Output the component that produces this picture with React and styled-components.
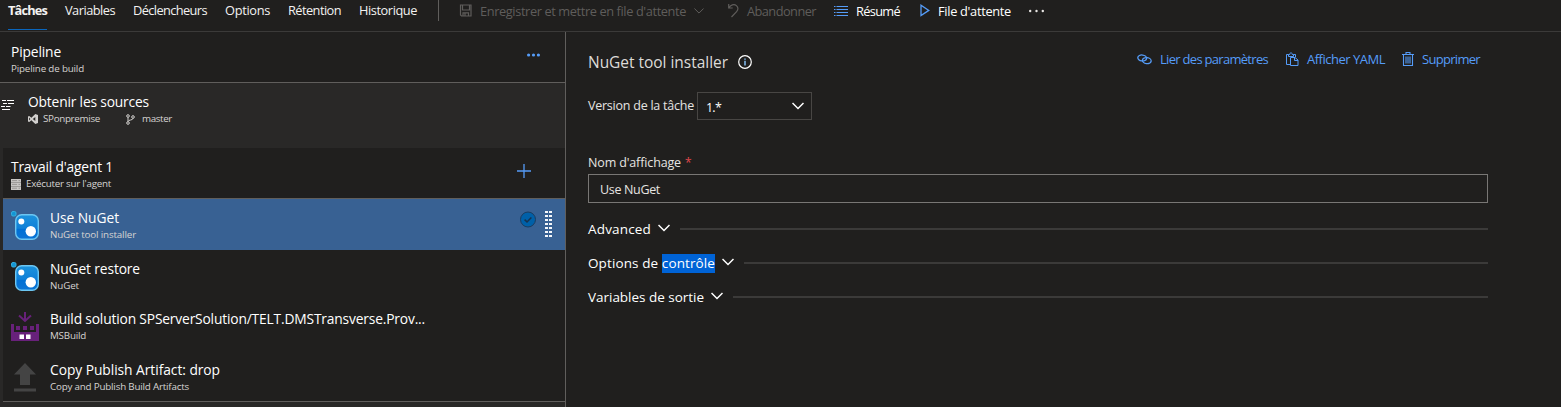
import React, { useLayoutEffect, useRef, useState } from "react";
import styled, { createGlobalStyle } from "styled-components";

const c = {
  bg: "#201f1e",
  panel: "#292827",
  line: "#3b3a39",
  edge: "#605e5c",
  blue: "#559cf8",
  disabled: "#5f5d5b",
};

const GlobalStyle = createGlobalStyle`
  * { box-sizing: border-box; }
  body {
    margin: 0;
    background: ${c.bg};
    color: #fff;
    font-family: "Open Sans", "Noto Sans", sans-serif;
    overflow: hidden;
  }
  svg { display: block; flex: none; }
`;

const TextBox = styled.span`
  display: block;
  flex: none;
  white-space: nowrap;
  width: ${(p) => p.$width}px;
  font-size: ${(p) => p.$size}px;
  line-height: ${(p) => p.$line || 20}px;
  font-weight: ${(p) => p.$weight || 400};
  color: ${(p) => p.$color || "inherit"};
`;

/* Tracks its letters so that the string fills the given width. */
function Text({ width, size = 13, line, weight, color, children }) {
  const ref = useRef(null);
  const [spacing, setSpacing] = useState(0);
  useLayoutEffect(() => {
    const natural = ref.current.getBoundingClientRect().width;
    const count = ref.current.textContent.length;
    setSpacing((width - natural) / count);
  }, [width]);
  return (
    <TextBox $width={width} $size={size} $line={line} $weight={weight} $color={color}>
      <span ref={ref} style={{ letterSpacing: spacing }}>{children}</span>
    </TextBox>
  );
}

const Page = styled.div`
  display: flex;
  flex-direction: column;
  height: 407px;
`;
const TopBar = styled.header`
  display: flex;
  height: 32px;
  border-bottom: 1px solid ${c.line};
`;
const Tabs = styled.nav`
  display: flex;
  gap: 18px;
  width: 438px;
  padding-left: 8px;
`;
const Tab = styled.div`
  height: 30px;
  border-bottom: 1px solid ${(p) => (p.$active ? "#0a66bd" : "transparent")};
`;
const Tools = styled.div`
  display: flex;
  height: 21px;
  align-items: center;
  padding-left: 20px;
  border-left: 1px solid ${c.edge};
`;
const Tool = styled.div`
  display: flex;
  align-items: center;
  height: 20px;
  gap: 8px;
  margin-right: ${(p) => p.$after}px;
  color: ${(p) => (p.$disabled ? c.disabled : "#fff")};
`;
const Body = styled.div`
  display: flex;
  flex: 1;
  min-height: 0;
`;
const Sidebar = styled.aside`
  display: flex;
  flex-direction: column;
  width: 566px;
  border-right: 1px solid ${c.edge};
  background: ${c.panel};
`;
const PipelineHead = styled.div`
  display: flex;
  justify-content: space-between;
  height: 51px;
  padding: 10px 25px 0 11px;
  background: ${c.bg};
  border-bottom: 1px solid ${c.edge};
`;
const MoreButton = styled.div`
  padding-top: 11px;
`;
const Sources = styled.div`
  display: flex;
  height: 65px;
  padding: 9px 0 0 0;
  gap: 14px;
`;
const SourceGlyph = styled.div`
  padding-top: 7px;
`;
const SubLine = styled.div`
  display: flex;
  align-items: center;
  gap: 5px;
  height: 14px;
`;
const Branch = styled.div`
  display: flex;
  align-items: center;
  gap: 7px;
  margin-left: 21px;
`;
const Job = styled.section`
  margin-left: 3px;
  height: 254px;
  background: ${c.bg};
  border-bottom: 1px solid ${c.edge};
`;
const JobHead = styled.div`
  display: flex;
  justify-content: space-between;
  height: 51px;
  padding: 9px 34px 0 8px;
  border-bottom: 1px solid ${c.edge};
`;
const AddButton = styled.div`
  padding-top: 7px;
`;
const Task = styled.div`
  display: flex;
  height: ${(p) => p.$height}px;
  padding: 9px 13px 0 8px;
  background: ${(p) => (p.$selected ? "#386193" : "transparent")};
`;
const TaskIcon = styled.div`
  width: 39px;
  padding-top: 3px;
`;
const TaskText = styled.div`
  flex: 1;
`;
const TaskState = styled.div`
  display: flex;
  gap: 9px;
  padding-top: 3px;
`;
const Grip = styled.div`
  display: grid;
  grid-template-columns: 3px 3px;
  grid-auto-rows: 2px;
  gap: 2px 1px;
  align-content: start;
  & > i { background: #f4f7fa; }
`;
const Detail = styled.main`
  flex: 1;
  padding: 17px 73px 0 22px;
`;
const DetailHead = styled.div`
  display: flex;
  justify-content: space-between;
  height: 43px;
  padding-right: 8px;
`;
const Heading = styled.div`
  display: flex;
  align-items: center;
  gap: 10px;
  height: 25px;
`;
const Actions = styled.div`
  display: flex;
  gap: 17px;
  height: 20px;
  color: ${c.blue};
`;
const Action = styled.div`
  display: flex;
  align-items: center;
  gap: 8px;
`;
const VersionRow = styled.div`
  display: flex;
  height: 28px;
  gap: 3px;
  margin-bottom: 33px;
`;
const VersionLabel = styled.div`
  padding-top: 4px;
`;
const Select = styled.div`
  display: flex;
  align-items: center;
  justify-content: space-between;
  width: 115px;
  padding: 0 7px 0 8px;
  border: 1px solid #484644;
`;
const SelectValue = styled.div`
  padding-top: 3px;
`;
const FieldLabel = styled.div`
  display: flex;
  gap: 4px;
  height: 21px;
`;
const Input = styled.div`
  height: 29px;
  padding: 5px 11px 0;
  border: 1px solid #797775;
  margin-bottom: 9px;
`;
const Group = styled.div`
  display: flex;
  align-items: center;
  height: 34px;
`;
const Rule = styled.div`
  flex: 1;
  height: 2px;
  margin-left: 10px;
  background: ${c.line};
`;
const GroupChevron = styled.div`
  margin-left: 7px;
  padding-bottom: 2px;
`;
const Selection = styled.mark`
  padding-bottom: 1px;
  background: #0063d6;
  color: #fff;
`;

const Chevron = ({ w = 12, color = "#fff", stroke = 1.5 }) => (
  <svg width={w} height="8" viewBox="0 0 12 8" fill="none" stroke={color} strokeWidth={stroke}>
    <path d="M.5 1 6 6.5 11.5 1" />
  </svg>
);
const SaveIcon = () => (
  <svg width="13" height="14" viewBox="0 0 13 14" fill="none" stroke={c.disabled} strokeWidth="1.2">
    <path d="M1.5 1h10.500v11H2.500l-1-1zM3.500 1v5h7v-5M4 12V8.800h5.500V12M6 9.500v2" />
  </svg>
);
const UndoIcon = () => (
  <svg width="11" height="15" viewBox="0 0 11 15" fill="none" stroke={c.disabled} strokeWidth="1.200">
    <path d="M.7 1v4h4M.9 4.800C2.500 2 6 .6 8.400 2.600c2 1.700 2 4.200.2 6L3.500 14" />
  </svg>
);
const ListIcon = () => (
  <svg width="14" height="12" viewBox="0 0 14 12" stroke={c.blue} strokeWidth="1.2">
    <path d="M0 1.500h1.500M2.500 1.500H14M0 4.500h1.500M2.500 4.500H14M0 7.500h1.500M2.500 7.500H14M0 10.500h1.500M2.500 10.500H14" />
  </svg>
);
const PlayIcon = () => (
  <svg width="10" height="13" viewBox="0 0 10 13" fill="none" stroke={c.blue} strokeWidth="1.300">
    <path d="M1 1.200v10.400L8.800 6.400z" />
  </svg>
);
const Dots = ({ color, w = 13, r = 1.600 }) => (
  <svg width={w} height="4" viewBox={`0 0 ${w} 4`} fill={color}>
    <circle cx={r} cy="2" r={r} />
    <circle cx={w / 2} cy="2" r={r} />
    <circle cx={w - r} cy="2" r={r} />
  </svg>
);
const StepsIcon = () => (
  <svg width="14" height="12" viewBox="0 0 14 12" stroke="#fff">
    <path d="M2 1.500h4M7 1.500h7M4 4.500h3M8 4.500h6M1 7.500h4M6 7.500h4.500M3 4.500h4M2 10.500h8" />
  </svg>
);
const VsIcon = () => (
  <svg width="10" height="10" viewBox="0 0 10 10" fill="#d2d0ce" fillRule="evenodd">
    <path d="M7.300 0 10 1v8l-2.700 1L3.400 6.300 1.200 8 0 7.400V2.600L1.200 2l2.200 1.700zM7.300 3 4.800 5l2.500 2zM1.100 3.600v2.800L2.400 5z" />
  </svg>
);
const BranchIcon = () => (
  <svg width="9" height="11" viewBox="0 0 9 11" fill="none" stroke="#d2d0ce">
    <circle cx="2" cy="2" r="1.300" />
    <circle cx="7" cy="3" r="1.300" />
    <circle cx="2" cy="9" r="1.300" />
    <path d="M2 3.300v4.400M7 4.300C7 6.500 2.500 5.500 2 7.500" />
  </svg>
);
const ServerIcon = () => (
  <svg width="10" height="11" viewBox="0 0 10 11">
    <path d="M0 0h10v3.400H0zM0 3.800h10v3.400H0zM0 7.600h10V11H0z" fill="#c8c6c4" />
    <path d="M1 1.600h5M1 5.400h5M1 9.200h5M7.500 1.600H9M7.500 5.400H9M7.500 9.200H9" stroke="#8a8886" strokeWidth=".8" />
  </svg>
);
const PlusIcon = () => (
  <svg width="14" height="14" viewBox="0 0 14 14" stroke={c.blue} strokeWidth="1.300">
    <path d="M7 0v14M0 7h14" />
  </svg>
);
const NugetIcon = () => (
  <svg width="28" height="29" viewBox="0 0 28 29">
    <defs>
      <linearGradient id="nuget" x1="0" y1="0" x2="0" y2="1">
        <stop offset="0" stopColor="#1c93dd" />
        <stop offset=".55" stopColor="#0f80d8" />
        <stop offset=".6" stopColor="#0070d4" />
        <stop offset="1" stopColor="#0b74d6" />
      </linearGradient>
    </defs>
    <rect x=".5" y=".5" width="4.500" height="4.500" rx="1.500" fill="#1495d4" stroke="#35b0e0" />
    <rect x="4.700" y="3.700" width="22.600" height="24.600" rx="6" fill="url(#nuget)" stroke="#6cc6f2" strokeWidth="1.400" />
    <circle cx="10.300" cy="10.500" r="3" fill="#fff" />
    <circle cx="19.800" cy="20.300" r="5.200" fill="#fff" />
  </svg>
);
const BuildIcon = () => (
  <svg width="28" height="29" viewBox="0 0 28 29">
    <path d="M14 0v8M8 3.500 14 9l6-5.500" fill="none" stroke="#68217a" strokeWidth="2" />
    <path d="M0 12h3v8h22v-8h3v17H0z" fill="#68217a" />
    <path d="M5 14h4v4H5zM12 14h4v4h-4zM19 14h4v4h-4z" fill="#68217a" />
    <path d="M8.500 22.500H13V27H8.500zM15 22.500h4.500V27H15z" fill="#fff" />
  </svg>
);
const PublishIcon = () => (
  <svg width="28" height="29" viewBox="0 0 28 29" fill="#444">
    <path d="M14 0 25 11.500h-6V22H9V11.500H3zM3 25.500h22v3H3z" />
  </svg>
);
const CheckIcon = () => (
  <svg width="16" height="17" viewBox="0 0 16 17">
    <circle cx="8" cy="8.500" r="7.500" fill="#0060a8" stroke="#1b3c60" />
    <path d="m4.600 8.600 2.400 2.300 4.400-4.500" fill="none" stroke="#17324f" strokeWidth="1.500" />
  </svg>
);
const InfoIcon = () => (
  <svg width="14" height="14" viewBox="0 0 14 14" fill="none">
    <circle cx="7" cy="7" r="6.300" stroke="#fff" strokeWidth="1.200" />
    <path d="M7 5.800v4.700M7 3.500v1.300" stroke="#8cc8ff" strokeWidth="1.400" />
  </svg>
);
const LinkIcon = () => (
  <svg width="15" height="11" viewBox="0 0 15 11" fill="none" stroke={c.blue} strokeWidth="1.300">
    <ellipse cx="5.200" cy="4" rx="4.400" ry="3" transform="rotate(8 5.200 4)" />
    <ellipse cx="9.800" cy="6.600" rx="4.400" ry="3" transform="rotate(8 9.800 6.600)" />
  </svg>
);
const PasteIcon = () => (
  <svg width="14" height="14" viewBox="0 0 14 14" fill="none" stroke={c.blue}>
    <path d="M5 12.500H1.500v-10h2M8.500 2.500h2V5M3.500 4.500V2.500h1.300c0-2.300 2.400-2.300 2.400 0h1.300v2zM5.500 5.500h4.500l3 2.500v5.500H5.500zM9.500 5.500v3H13" />
  </svg>
);
const TrashIcon = () => (
  <svg width="12" height="14" viewBox="0 0 12 14" fill="none" stroke={c.blue} strokeWidth="1.1">
    <path d="M0 2.500h12M4 2.500v-2h4v2M1.500 2.500v11h9v-11M4 4.500v7M6 4.500v7M8 4.500v7" />
  </svg>
);

const tabs = [
  ["Tâches", 39, true],
  ["Variables", 50],
  ["Déclencheurs", 74],
  ["Options", 45],
  ["Rétention", 53],
  ["Historique", 58],
];

const tasks = [
  { title: "Use NuGet", w: 69, sub: "NuGet tool installer", sw: 86, icon: <NugetIcon />, h: 51, selected: true },
  { title: "NuGet restore", w: 90, sub: "NuGet", sw: 29, icon: <NugetIcon />, h: 50 },
  { title: "Build solution SPServerSolution/TELT.DMSTransverse.Prov...", w: 375, sub: "MSBuild", sw: 36, icon: <BuildIcon />, h: 51 },
  { title: "Copy Publish Artifact: drop", w: 170, sub: "Copy and Publish Build Artifacts", sw: 139, icon: <PublishIcon />, h: 50 },
];

const Sub = ({ width, children }) => (
  <Text width={width} size={9.800} line={14} color="#d6d4d2">{children}</Text>
);

export default function App() {
  return (
    <Page>
      <GlobalStyle />
      <TopBar>
        <Tabs>
          {tabs.map(([name, w, active]) => (
            <Tab key={name} $active={active}>
              <Text width={w} size={12.800} line={21} weight={active ? 700 : 400} color="#f3f2f1">{name}</Text>
            </Tab>
          ))}
        </Tabs>
        <Tools>
          <Tool $disabled $after={24}>
            <SaveIcon />
            <Text width={206} size={12.800}>Enregistrer et mettre en file d'attente</Text>
            <Chevron w={10} color={c.disabled} stroke={1.2} />
          </Tool>
          <Tool $disabled $after={18}>
            <UndoIcon />
            <Text width={69} size={12.800}>Abandonner</Text>
          </Tool>
          <Tool $after={20}>
            <ListIcon />
            <Text width={44} size={12.800}>Résumé</Text>
          </Tool>
          <Tool $after={18}>
            <PlayIcon />
            <Text width={73} size={12.800}>File d'attente</Text>
          </Tool>
          <Dots color="#e8e6e4" w={15} r={1.2} />
        </Tools>
      </TopBar>
      <Body>
        <Sidebar>
          <PipelineHead>
            <div>
              <Text width={50} size={13.800}>Pipeline</Text>
              <Sub width={73}>Pipeline de build</Sub>
            </div>
            <MoreButton><Dots color={c.blue} /></MoreButton>
          </PipelineHead>
          <Sources>
            <SourceGlyph><StepsIcon /></SourceGlyph>
            <div>
              <Text width={121} size={13.800}>Obtenir les sources</Text>
              <SubLine>
                <VsIcon />
                <Sub width={57}>SPonpremise</Sub>
                <Branch>
                  <BranchIcon />
                  <Sub width={30}>master</Sub>
                </Branch>
              </SubLine>
            </div>
          </Sources>
          <Job>
            <JobHead>
              <div>
                <Text width={102} size={13.800}>Travail d'agent 1</Text>
                <SubLine>
                  <ServerIcon />
                  <Sub width={85}>Exécuter sur l'agent</Sub>
                </SubLine>
              </div>
              <AddButton><PlusIcon /></AddButton>
            </JobHead>
            {tasks.map((t) => (
              <Task key={t.title} $height={t.h} $selected={t.selected}>
                <TaskIcon>{t.icon}</TaskIcon>
                <TaskText>
                  <Text width={t.w} size={13.800}>{t.title}</Text>
                  <Sub width={t.sw}>{t.sub}</Sub>
                </TaskText>
                {t.selected && (
                  <TaskState>
                    <CheckIcon />
                    <Grip>{Array.from({ length: 14 }, (_, i) => <i key={i} />)}</Grip>
                  </TaskState>
                )}
              </Task>
            ))}
          </Job>
        </Sidebar>
        <Detail>
          <DetailHead>
            <Heading>
              <Text width={140} size={15.500} line={24} color="#dddbd9">NuGet tool installer</Text>
              <InfoIcon />
            </Heading>
            <Actions>
              <Action><LinkIcon /><Text width={108}>Lier des paramètres</Text></Action>
              <Action><PasteIcon /><Text width={78}>Afficher YAML</Text></Action>
              <Action><TrashIcon /><Text width={58}>Supprimer</Text></Action>
            </Actions>
          </DetailHead>
          <VersionRow>
            <VersionLabel><Text width={106} size={12.500} color="#e6e4e2">Version de la tâche</Text></VersionLabel>
            <Select>
              <SelectValue><Text width={15} size={12.500}>1.*</Text></SelectValue>
              <Chevron />
            </Select>
          </VersionRow>
          <FieldLabel>
            <Text width={93} size={12.500} color="#e6e4e2">Nom d'affichage</Text>
            <Text width={5} size={12} color="#e0474c">*</Text>
          </FieldLabel>
          <Input><Text width={60} size={12.500} color="#e6e4e2">Use NuGet</Text></Input>
          <Group>
            <Text width={63} size={13.500}>Advanced</Text>
            <GroupChevron><Chevron /></GroupChevron>
            <Rule />
          </Group>
          <Group>
            <Text width={127} size={13.500}>Options de <Selection>contrôle</Selection></Text>
            <GroupChevron><Chevron /></GroupChevron>
            <Rule />
          </Group>
          <Group>
            <Text width={116} size={13.500}>Variables de sortie</Text>
            <GroupChevron><Chevron /></GroupChevron>
            <Rule />
          </Group>
        </Detail>
      </Body>
    </Page>
  );
}
